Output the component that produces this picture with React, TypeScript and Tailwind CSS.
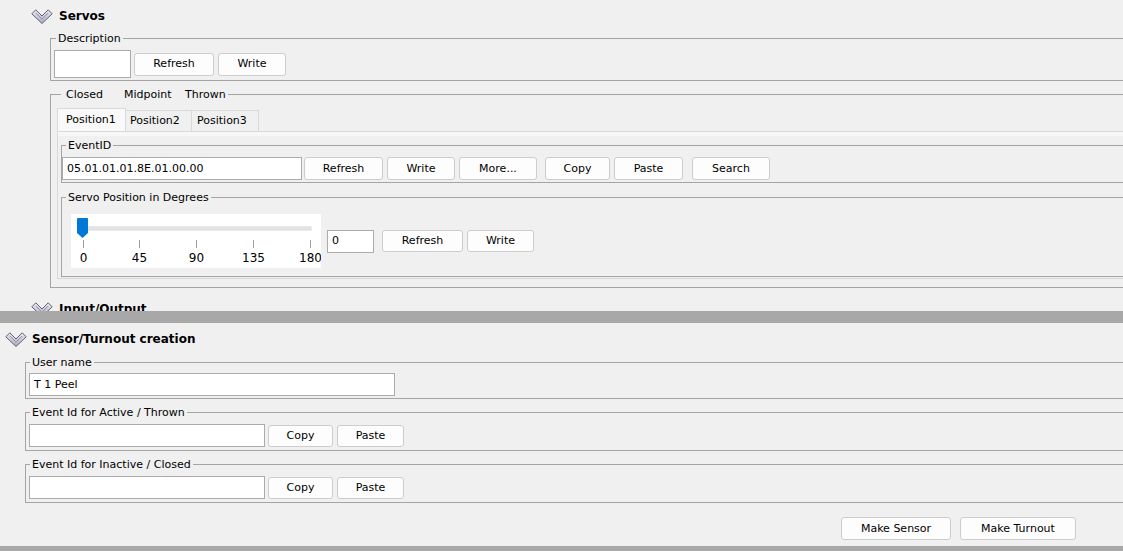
import React from "react";

function Chevron() {
  return (
    <svg width="22" height="16" viewBox="0 0 22 16" className="shrink-0">
      <defs>
        <linearGradient id="chv" x1="0" y1="0" x2="0" y2="1">
          <stop offset="0" stopColor="#ececf6" />
          <stop offset="1" stopColor="#a9a9c2" />
        </linearGradient>
      </defs>
      <path d="M0.8 5.8 L4.8 1.8 L11 8 L17.2 1.8 L21.2 5.8 L11 15.5 Z" fill="url(#chv)" stroke="#616171" strokeWidth="1" strokeLinejoin="round" />
      <path d="M4.8 5 L11 11.2 L17.2 5" fill="none" stroke="#8d8da3" strokeWidth="1" />
    </svg>
  );
}

function Btn({ w, h = "h-[23px]", children }: { w: string; h?: string; children: React.ReactNode }) {
  return (
    <div className={`${w} ${h} shrink-0 flex items-center justify-center rounded-[3px] border border-[#cdcdcd] bg-[#fdfdfd] text-black`}>
      {children}
    </div>
  );
}

function Field({ w, h = "h-[23px]", value = "" }: { w: string; h?: string; value?: string }) {
  return (
    <div className={`${w} ${h} shrink-0 flex items-center border border-[#ababab] bg-white pl-[4px] text-black`}>
      {value}
    </div>
  );
}

function Legend({ ml, children }: { ml: string; children: React.ReactNode }) {
  return (
    <legend className={`${ml} px-[2px] leading-[14px]`}>
      <span className="relative top-[1px]">{children}</span>
    </legend>
  );
}

function Slider() {
  const ticks = [12, 68, 125, 182, 239];
  const labels = ["0", "45", "90", "135", "180"];
  return (
    <svg width="250" height="54" className="shrink-0 bg-white">
      <rect x="13" y="13" width="227" height="3" fill="#e6e6e6" stroke="#d9d9d9" strokeWidth="1" />
      {ticks.map((x, i) => (
        <g key={i}>
          <line x1={x + 0.5} y1="26" x2={x + 0.5} y2="34" stroke="#a0a0a0" strokeWidth="1" />
          <text x={x + 0.5} y="48" textAnchor="middle" fontSize="12" fontFamily="DejaVu Sans, sans-serif" fill="#000">
            {labels[i]}
          </text>
        </g>
      ))}
      <path d="M6 5 Q6 4 7 4 L16 4 Q17 4 17 5 L17 19 L11.5 24 L6 19 Z" fill="#0078d7" />
    </svg>
  );
}

export default function App() {
  return (
    <div className="h-[551px] w-full overflow-hidden flex flex-col bg-[#f0f0f0] font-['DejaVu_Sans',sans-serif] text-[11px] leading-[14px] text-black">
      {/* Top panel */}
      <div className="h-[311px] shrink-0 overflow-hidden">
        <div className="h-[31px] flex items-center pl-[31px] gap-[6px]">
          <Chevron />
          <span className="font-bold text-[12px]">Servos</span>
        </div>

        <div className="pl-[50px]">
          <fieldset className="border border-r-0 border-[#a5a5a5] p-0 m-0">
            <Legend ml="ml-[5px]">Description</Legend>
            <div className="flex items-center pl-[3px] pt-[5px] pb-[2px]">
              <Field w="w-[77px]" h="h-[28px]" />
              <div className="ml-[3px]"><Btn w="w-[80px]">Refresh</Btn></div>
              <div className="ml-[4px]"><Btn w="w-[68px]">Write</Btn></div>
            </div>
          </fieldset>

          <fieldset className="mt-[6px] border border-r-0 border-[#a5a5a5] p-0 m-0">
            <legend className="ml-[10px] pl-[5px] pr-[2px] leading-[14px]">
              <span className="relative top-[1px] inline-block w-[58px]">Closed</span>
              <span className="relative top-[1px] inline-block w-[61px]">Midpoint</span>
              <span className="relative top-[1px] inline-block">Thrown</span>
            </legend>
            <div className="pl-[6px] pt-[7px] pb-[8px]">
              <div className="flex items-end h-[23px]">
                <div className="w-[69px] h-[23px] flex items-center pl-[8px] bg-[#f9f9f9] border border-b-0 border-[#d9d9d9]">Position1</div>
                <div className="w-[66px] h-[21px] flex items-center pl-[4px] bg-[#f0f0f0] border border-l-0 border-b-0 border-[#d9d9d9]">Position2</div>
                <div className="w-[67px] h-[21px] flex items-center pl-[5px] bg-[#f0f0f0] border border-l-0 border-b-0 border-[#d9d9d9]">Position3</div>
              </div>
              <div className="border border-r-0 border-[#d9d9d9] bg-[#f0f0f0] pl-[3px] pt-[6px] pb-[1px] shadow-[inset_0_4px_0_#f7f7f7]">
                <fieldset className="border border-r-0 border-[#a5a5a5] p-0 m-0">
                  <Legend ml="ml-[4px]">EventID</Legend>
                  <div className="flex items-center pt-[5px] pb-[2px]">
                    <Field w="w-[240px]" value="05.01.01.01.8E.01.00.00" />
                    <div className="ml-[2px]"><Btn w="w-[79px]">Refresh</Btn></div>
                    <div className="ml-[4px]"><Btn w="w-[68px]">Write</Btn></div>
                    <div className="ml-[4px]"><Btn w="w-[78px]">More...</Btn></div>
                    <div className="ml-[8px]"><Btn w="w-[65px]">Copy</Btn></div>
                    <div className="ml-[4px]"><Btn w="w-[69px]">Paste</Btn></div>
                    <div className="ml-[9px]"><Btn w="w-[78px]">Search</Btn></div>
                  </div>
                </fieldset>

                <fieldset className="mt-[7px] border border-r-0 border-[#a5a5a5] p-0 m-0">
                  <Legend ml="ml-[4px]">Servo Position in Degrees</Legend>
                  <div className="flex items-center pl-[9px] pt-[10px] pb-[8px]">
                    <Slider />
                    <div className="ml-[6px]"><Field w="w-[47px]" value="0" /></div>
                    <div className="ml-[8px]"><Btn w="w-[81px]" h="h-[22px]">Refresh</Btn></div>
                    <div className="ml-[4px]"><Btn w="w-[67px]" h="h-[22px]">Write</Btn></div>
                  </div>
                </fieldset>
              </div>
            </div>
          </fieldset>
        </div>

        <div className="mt-[6px] h-[30px] flex items-center pl-[31px] gap-[6px]">
          <Chevron />
          <span className="font-bold text-[12px]">Input/Output</span>
        </div>
      </div>

      {/* Divider */}
      <div className="h-[12px] shrink-0 bg-[#a8a8a8]" />

      {/* Bottom panel */}
      <div className="flex-1 min-h-0 overflow-hidden">
        <div className="h-[32px] flex items-center pl-[5px] gap-[5px]">
          <Chevron />
          <span className="font-bold text-[12px]">Sensor/Turnout creation</span>
        </div>
        <div className="pl-[25px]">
          <fieldset className="border border-r-0 border-[#a5a5a5] p-0 m-0">
            <Legend ml="ml-[4px]">User name</Legend>
            <div className="flex items-center pl-[3px] pt-[4px] pb-[2px]">
              <Field w="w-[366px]" value="T 1 Peel" />
            </div>
          </fieldset>

          <fieldset className="mt-[6px] border border-r-0 border-[#a5a5a5] p-0 m-0">
            <Legend ml="ml-[4px]">Event Id for Active / Thrown</Legend>
            <div className="flex items-center pl-[3px] pt-[5px] pb-[3px]">
              <Field w="w-[236px]" />
              <div className="ml-[3px]"><Btn w="w-[65px]" h="h-[22px]">Copy</Btn></div>
              <div className="ml-[4px]"><Btn w="w-[67px]" h="h-[22px]">Paste</Btn></div>
            </div>
          </fieldset>

          <fieldset className="mt-[6px] border border-r-0 border-[#a5a5a5] p-0 m-0">
            <Legend ml="ml-[4px]">Event Id for Inactive / Closed</Legend>
            <div className="flex items-center pl-[3px] pt-[5px] pb-[3px]">
              <Field w="w-[236px]" />
              <div className="ml-[3px]"><Btn w="w-[65px]" h="h-[22px]">Copy</Btn></div>
              <div className="ml-[4px]"><Btn w="w-[67px]" h="h-[22px]">Paste</Btn></div>
            </div>
          </fieldset>
        </div>

        <div className="mt-[14px] flex justify-end gap-[9px] pr-[47px]">
          <Btn w="w-[110px]">Make Sensor</Btn>
          <Btn w="w-[116px]">Make Turnout</Btn>
        </div>
      </div>

      <div className="h-[5px] shrink-0 bg-[#a8a8a8]" />
    </div>
  );
}
